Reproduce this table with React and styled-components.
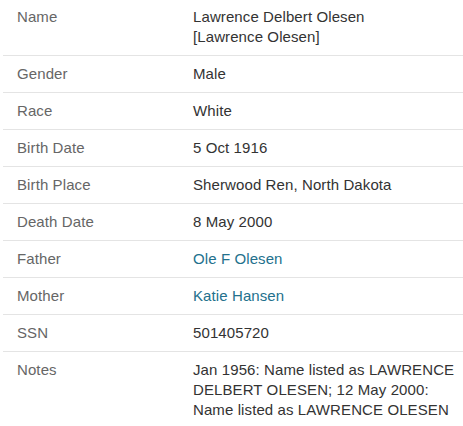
import React from 'react';
import styled, { createGlobalStyle } from 'styled-components';

const GlobalStyle = createGlobalStyle`
    body {
        margin: 0;
        background: #ffffff;
        font-family: "Liberation Sans", Arial, sans-serif;
    }
`;

const records = [
    { label: 'Name', value: 'Lawrence Delbert Olesen\n[Lawrence Olesen]' },
    { label: 'Gender', value: 'Male' },
    { label: 'Race', value: 'White' },
    { label: 'Birth Date', value: '5 Oct 1916' },
    { label: 'Birth Place', value: 'Sherwood Ren, North Dakota' },
    { label: 'Death Date', value: '8 May 2000' },
    { label: 'Father', value: 'Ole F Olesen', link: true },
    { label: 'Mother', value: 'Katie Hansen', link: true },
    { label: 'SSN', value: '501405720' },
    {
        label: 'Notes',
        value: 'Jan 1956: Name listed as LAWRENCE DELBERT OLESEN; 12 May 2000: Name listed as LAWRENCE OLESEN',
        last: true,
    },
];

export default function App() {
    return (
        <>
            <GlobalStyle />
            <Table>
                {records.map((r, i) => (
                    <Row key={r.label} $first={i === 0} $last={r.last}>
                        <Label>{r.label}</Label>
                        <Value>
                            {r.link ? <PersonLink href="#">{r.value}</PersonLink> : r.value}
                        </Value>
                    </Row>
                ))}
            </Table>
        </>
    );
}

const Table = styled.div`
    display: flex;
    flex-direction: column;
    margin-left: 3px;
    font-size: 15px;
    line-height: 20px;
    letter-spacing: 0.1px;
`;

const Row = styled.div`
    display: grid;
    grid-template-columns: 190px 1fr;
    padding: ${props => (props.$first ? '7px' : '8px')} 4px 8px 0;
    border-bottom: ${props => (props.$last ? 'none' : '1px solid #e4e4e4')};
`;

const Label = styled.div`
    padding-left: 14px;
    color: #666666;
`;

const Value = styled.div`
    color: #333333;
    white-space: pre-line;
`;

const PersonLink = styled.a`
    color: #23718d;
    text-decoration: none;
`;
